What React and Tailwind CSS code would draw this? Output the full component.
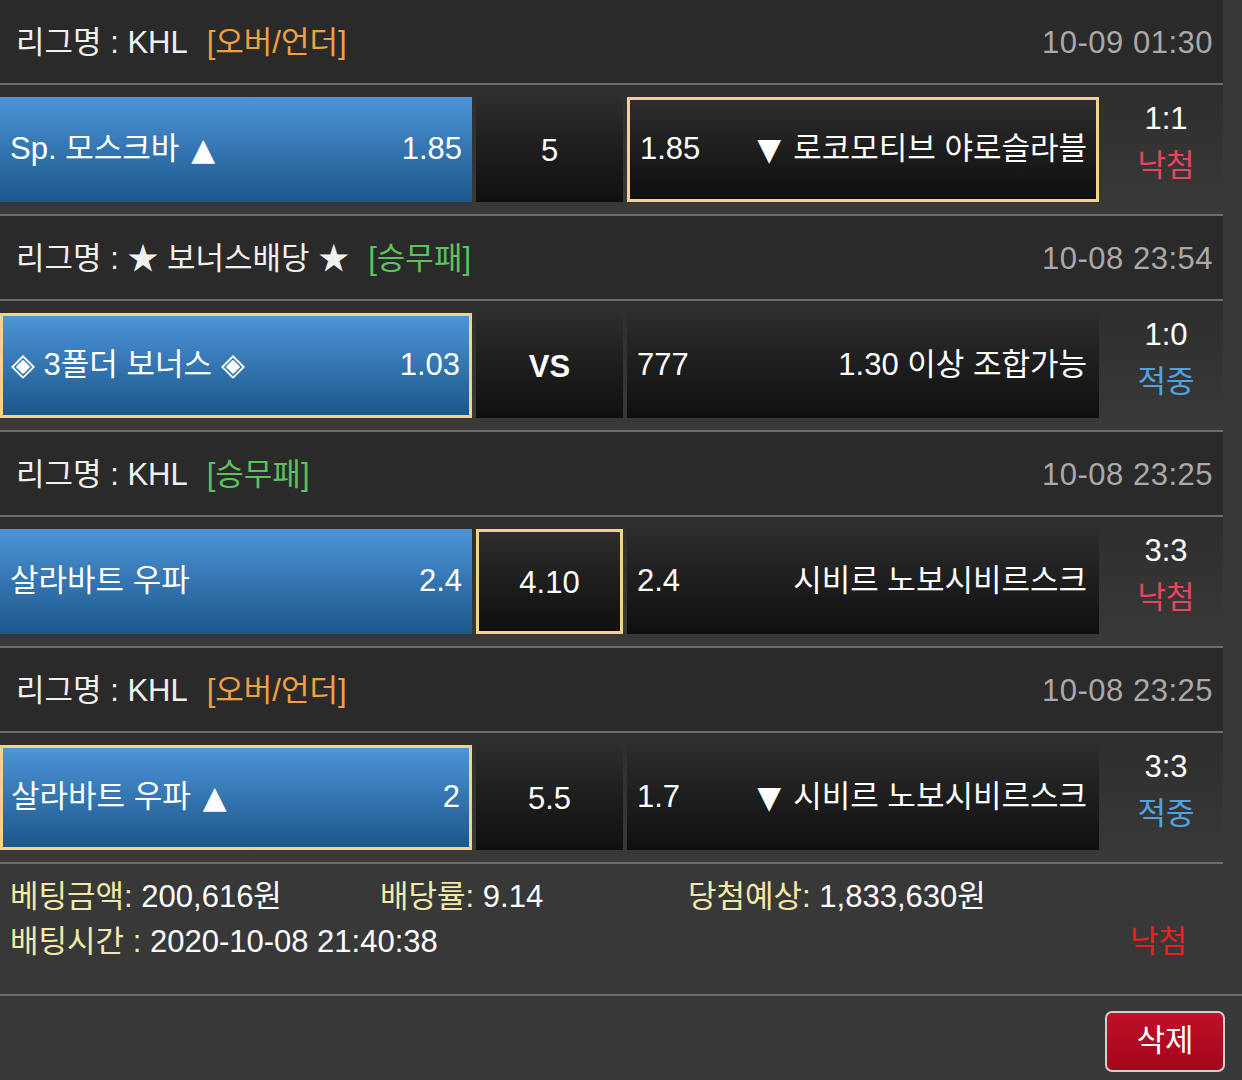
import React from 'react';

const bets = [
  {
    league: 'KHL',
    tag: '[오버/언더]',
    tagColor: 'text-[#f0a040]',
    date: '10-09 01:30',
    home: ['Sp. 모스크바', '▲'],
    homeOdds: '1.85',
    mid: '5',
    awayOdds: '1.85',
    away: ['▼', '로코모티브 야로슬라블'],
    picked: 'away',
    score: '1:1',
    result: '낙첨',
  },
  {
    league: '★ 보너스배당 ★',
    tag: '[승무패]',
    tagColor: 'text-[#5cc25c]',
    date: '10-08 23:54',
    home: ['◈ 3폴더 보너스 ◈'],
    homeOdds: '1.03',
    mid: 'VS',
    awayOdds: '777',
    away: ['1.30 이상 조합가능'],
    picked: 'home',
    score: '1:0',
    result: '적중',
  },
  {
    league: 'KHL',
    tag: '[승무패]',
    tagColor: 'text-[#5cc25c]',
    date: '10-08 23:25',
    home: ['살라바트 우파'],
    homeOdds: '2.4',
    mid: '4.10',
    awayOdds: '2.4',
    away: ['시비르 노보시비르스크'],
    picked: 'mid',
    score: '3:3',
    result: '낙첨',
  },
  {
    league: 'KHL',
    tag: '[오버/언더]',
    tagColor: 'text-[#f0a040]',
    date: '10-08 23:25',
    home: ['살라바트 우파', '▲'],
    homeOdds: '2',
    mid: '5.5',
    awayOdds: '1.7',
    away: ['▼', '시비르 노보시비르스크'],
    picked: 'home',
    score: '3:3',
    result: '적중',
  },
];

const Separator = () => <div className="h-[2px] bg-[#6c6c6c]" />;

// ▲ / ▼ are drawn bigger than the surrounding text, like the original
const Label = ({ parts }) => (
  <span className="flex items-center gap-[12px]">
    {parts.map((p, i) =>
      p === '▲' || p === '▼' ? (
        <span key={i} className="text-[31px] leading-none" style={{ fontFamily: '"DejaVu Sans", sans-serif' }}>
          {p}
        </span>
      ) : (
        <span key={i}>{p}</span>
      )
    )}
  </span>
);

const BetBlock = ({ bet }) => {
  const pickedBorder = 'border-[3px] border-[#f3d38a]';
  const darkCell = 'bg-gradient-to-b from-[#2d2d2d] to-[#0f0f0f]';
  return (
    <div>
      <div className="h-[83px] bg-[#2a2a2a] flex items-center justify-between pl-[16px] pr-[10px] pt-[3px]">
        <div className="flex items-center">
          <span className="text-[#f0f0f0]">리그명 : {bet.league}</span>
          <span className={`ml-[19px] ${bet.tagColor}`}>{bet.tag}</span>
        </div>
        <span className="text-[#a9a9a9] tracking-[0.5px]">{bet.date}</span>
      </div>
      <Separator />
      <div className="h-[129px] pt-[12px] bg-gradient-to-b from-[#2e2e2e] to-[#393939] flex">
        <div
          className={`w-[472px] h-[105px] flex items-center justify-between bg-gradient-to-b from-[#4c95d8] to-[#1c578b] text-white ${
            bet.picked === 'home' ? `${pickedBorder} pl-[8px] pr-[9px]` : 'pl-[10px] pr-[10px]'
          }`}
        >
          <Label parts={bet.home} />
          <span>{bet.homeOdds}</span>
        </div>
        <div
          className={`ml-[4px] w-[147px] h-[105px] flex items-center justify-center text-white pt-[4px] ${darkCell} ${
            bet.picked === 'mid' ? pickedBorder : ''
          } ${bet.mid === 'VS' ? 'font-bold' : ''}`}
        >
          {bet.mid}
        </div>
        <div
          className={`ml-[4px] w-[472px] h-[105px] flex items-center justify-between text-white ${darkCell} ${
            bet.picked === 'away' ? `${pickedBorder} pl-[10px] pr-[9px]` : 'pl-[10px] pr-[12px]'
          }`}
        >
          <span>{bet.awayOdds}</span>
          <Label parts={bet.away} />
        </div>
        <div className="flex-1 pl-[10px] pt-[2px] flex flex-col items-center leading-[40px] gap-[7px]">
          <span className="text-white">{bet.score}</span>
          <span className={bet.result === '낙첨' ? 'text-[#e3475a]' : 'text-[#4fa3e3]'}>{bet.result}</span>
        </div>
      </div>
      <Separator />
    </div>
  );
};

const App = () => {
  return (
    <div
      className="w-[1242px] h-[1080px] bg-[#383838] text-[31px] overflow-hidden"
      style={{ fontFamily: '"Liberation Sans", "Noto Sans CJK KR", sans-serif' }}
    >
      <div className="w-[1223px]">
        {bets.map((bet, i) => (
          <BetBlock key={i} bet={bet} />
        ))}
      </div>
      <div className="h-[130px] pt-[10px] pl-[10px] pr-[55px] leading-[45px]">
        <div className="flex">
          <div className="w-[370px]">
            <span className="text-[#f2eaa6]">베팅금액:</span>
            <span className="text-white"> 200,616원</span>
          </div>
          <div className="w-[308px]">
            <span className="text-[#f2eaa6]">배당률:</span>
            <span className="text-white"> 9.14</span>
          </div>
          <div>
            <span className="text-[#f2eaa6]">당첨예상:</span>
            <span className="text-white"> 1,833,630원</span>
          </div>
        </div>
        <div className="flex justify-between">
          <div>
            <span className="text-[#f2eaa6]">배팅시간 :</span>
            <span className="text-white"> 2020-10-08 21:40:38</span>
          </div>
          <span className="text-[#e52222]">낙첨</span>
        </div>
      </div>
      <div className="h-[2px] bg-[#6c6c6c]" />
      <div className="flex justify-end pt-[15px] pr-[17px]">
        <button className="w-[120px] h-[61px] rounded-[7px] border-2 border-[#cfcfcf] bg-gradient-to-b from-[#c20f2a] to-[#a3061b] text-white text-[31px]">
          삭제
        </button>
      </div>
    </div>
  );
};

export default App;
